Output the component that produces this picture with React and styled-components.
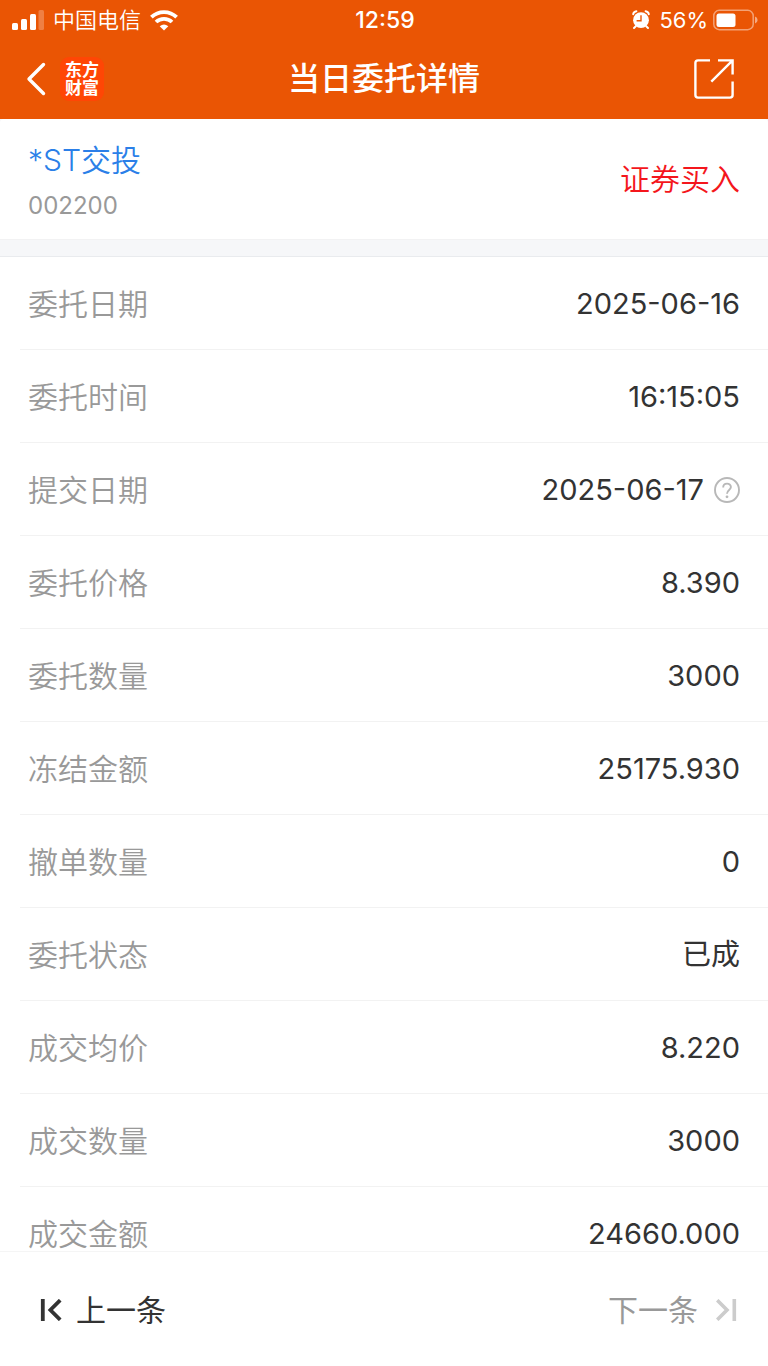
import React from 'react'
import styled, { createGlobalStyle } from 'styled-components'

const GlobalStyle = createGlobalStyle`
  * {
    box-sizing: border-box;
  }

  body {
    margin: 0;
    background: #ffffff;
    font-family: Inter, "Noto Sans CJK SC", sans-serif;
  }
`

const Screen = styled.div`
  height: 100vh;
  display: flex;
  flex-direction: column;
  background: #f6f7f9;
  color: #333333;
  font-size: 30px;
  line-height: 40px;
`

const Header = styled.header`
  flex: none;
  background: #ea5504;
  color: #ffffff;
`

const StatusBar = styled.div`
  height: 40px;
  padding: 0 10px 0 12px;
  display: grid;
  grid-template-columns: 1fr auto 1fr;
  align-items: center;
  font-size: 22px;
`

const StatusGroup = styled.div`
  display: flex;
  align-items: center;
  justify-content: ${props => props.$end ? 'flex-end' : 'flex-start'};
  gap: 9px;
`

const Carrier = styled.span`
  font-weight: 350;
`

const Battery = styled.div`
  display: flex;
  align-items: center;
  gap: 5px;
`

const Clock = styled.time`
  font-size: 23px;
  font-weight: 500;
`

const NavBar = styled.nav`
  height: 79px;
  padding: 0 24px 2px;
  display: grid;
  grid-template-columns: 1fr auto 1fr;
  align-items: center;
`

const NavLeft = styled.div`
  display: flex;
  align-items: center;
  gap: 12px;
`

const NavRight = styled.div`
  display: flex;
  justify-content: flex-end;
  padding-right: 10px;
`

const IconButton = styled.button`
  display: flex;
  padding: 0;
  border: 0;
  background: none;
  color: inherit;
  cursor: pointer;
`

const Logo = styled.div`
  width: 44px;
  height: 44px;
  padding: 4px 0;
  border-radius: 9px;
  background: #ff4605;
  font-size: 17px;
  font-weight: 700;
  line-height: 18px;
  text-align: center;
`

const Title = styled.h1`
  margin: 0;
  font-size: 32px;
  font-weight: 500;
`

const Summary = styled.section`
  flex: none;
  height: 120px;
  padding: 0 28px;
  display: flex;
  align-items: center;
  justify-content: space-between;
  border-radius: 4px 4px 0 0;
  background: #ffffff;
`

const Stock = styled.div`
  padding-top: 8px;
`

const StockName = styled.a`
  display: block;
  color: #2b7fe8;
  font-weight: 350;
  text-decoration: none;
`

const StockCode = styled.div`
  padding-top: 6px;
  color: #999999;
  font-size: 24px;
`

const Side = styled.div`
  color: #f4161c;
  font-weight: 350;
`

const Divider = styled.div`
  flex: none;
  height: 18px;
  border-top: 1px solid #f2f2f3;
  border-bottom: 1px solid #e9ebee;
`

const Details = styled.dl`
  flex: 1;
  min-height: 0;
  margin: 0;
  padding-left: 20px;
  overflow-y: auto;
  scrollbar-width: none;
  background: #ffffff;
`

const Row = styled.div`
  height: 93px;
  padding: 2px 28px 0 8px;
  display: flex;
  align-items: center;
  justify-content: space-between;
  border-bottom: 1px solid #f2f2f2;
`

const Label = styled.dt`
  color: #999999;
  font-weight: 350;
`

const Value = styled.dd`
  margin: 0;
  display: flex;
  align-items: center;
  gap: 10px;
  font-size: 29px;
`

const Footer = styled.footer`
  flex: none;
  height: 115px;
  padding: 2px 30px 0 40px;
  display: flex;
  align-items: center;
  justify-content: space-between;
  border-top: 1px solid #f5f5f5;
  background: #ffffff;
`

const PagerButton = styled.button`
  padding: 0;
  display: flex;
  align-items: center;
  gap: ${props => props.$gap}px;
  border: 0;
  background: none;
  color: #333333;
  font: inherit;
  cursor: pointer;

  &:disabled {
    color: #999999;
    cursor: default;
  }
`

const SignalIcon = () => (
  <svg width="32" height="20" viewBox="0 0 32 20" fill="#fff">
    <rect x="0" y="13" width="6" height="7" rx="1.5" />
    <rect x="9" y="9" width="6" height="11" rx="1.5" />
    <rect x="18" y="4" width="6" height="16" rx="1.5" />
    <rect x="26.5" y="0" width="5.5" height="20" rx="1.5" opacity="0.25" />
  </svg>
)

const WifiIcon = () => (
  <svg width="28" height="21" viewBox="0 0 28 21">
    <g fill="none" stroke="#fff" strokeWidth="3.8">
      <path d="M1.4 7.2C8.4 0.3 19.6 0.3 26.6 7.2" />
      <path d="M6 12C10.5 7.7 17.5 7.7 22 12" />
    </g>
    <path d="M14 20.6L9.7 16.2Q14 12.6 18.3 16.2Z" fill="#fff" />
  </svg>
)

const AlarmIcon = () => (
  <svg width="18" height="20" viewBox="0 0 18 20">
    <g fill="none" stroke="#fff" strokeWidth="2" strokeLinecap="round">
      <path d="M1.2 4.2Q1.6 1.6 4.4 1.2M13.6 1.2Q16.4 1.6 16.8 4.2" />
      <path d="M3.8 16.2L2 18M14.2 16.2L16 18" />
    </g>
    <circle cx="9" cy="10.2" r="7.9" fill="#fff" />
    <path d="M9 5.2V10.8H4.6" fill="none" stroke="#ea5504" strokeWidth="1.4" />
  </svg>
)

const BatteryIcon = () => (
  <svg width="45" height="22" viewBox="0 0 45 22">
    <rect x="0.8" y="1.3" width="39.4" height="19.4" rx="5.5" fill="none" stroke="#fff" strokeOpacity="0.45" strokeWidth="1.5" />
    <rect x="3.5" y="4.5" width="19" height="13.5" rx="2.5" fill="#fff" />
    <path d="M42 7.5Q44.6 8.2 44.6 11T42 14.5Z" fill="#fff" fillOpacity="0.5" />
  </svg>
)

const BackIcon = () => (
  <svg width="24" height="34" viewBox="0 0 24 34" fill="none" stroke="#fff" strokeWidth="3.4" strokeLinecap="round" strokeLinejoin="round">
    <path d="M19.5 2.5L5 17L19.5 31.5" />
  </svg>
)

const ShareIcon = () => (
  <svg width="40" height="40" viewBox="0 0 40 40" fill="none" stroke="#fff" strokeWidth="2.4">
    <path d="M16 1.4H4Q1.4 1.4 1.4 4V36Q1.4 38.6 4 38.6H36Q38.6 38.6 38.6 36V22.5" />
    <path d="M24 1.4H38.6V15.5M38.6 1.4L17.3 22.7" />
  </svg>
)

const HelpIcon = () => (
  <svg width="26" height="26" viewBox="0 0 26 26" fill="none" stroke="#b8b8b8" strokeWidth="1.9">
    <circle cx="13" cy="13" r="12" />
    <path d="M9.2 10.4C9.2 5.4 16.9 5.6 16.9 10C16.9 13 13 13 13 16.8" />
    <circle cx="13" cy="19.8" r="1.4" fill="#b8b8b8" stroke="none" />
  </svg>
)

const FirstIcon = () => (
  <svg width="22" height="22" viewBox="0 0 22 22" fill="none" stroke="#333333" strokeWidth="3.8">
    <path d="M2.8 0V22M20.2 1.2L10.4 11L20.2 20.8" />
  </svg>
)

const LastIcon = () => (
  <svg width="22" height="22" viewBox="0 0 22 22" fill="none" stroke="#cccccc" strokeWidth="3.6">
    <path d="M18.3 0V22M1.2 1.2L11 11L1.2 20.8" />
  </svg>
)

const details = [
  { label: '委托日期', value: '2025-06-16' },
  { label: '委托时间', value: '16:15:05' },
  { label: '提交日期', value: '2025-06-17', help: true },
  { label: '委托价格', value: '8.390' },
  { label: '委托数量', value: '3000' },
  { label: '冻结金额', value: '25175.930' },
  { label: '撤单数量', value: '0' },
  { label: '委托状态', value: '已成' },
  { label: '成交均价', value: '8.220' },
  { label: '成交数量', value: '3000' },
  { label: '成交金额', value: '24660.000' },
]

const App = () => (
  <Screen>
    <GlobalStyle />

    <Header>
      <StatusBar>
        <StatusGroup>
          <SignalIcon />
          <Carrier>中国电信</Carrier>
          <WifiIcon />
        </StatusGroup>
        <Clock>12:59</Clock>
        <StatusGroup $end>
          <AlarmIcon />
          <Battery>
            56%
            <BatteryIcon />
          </Battery>
        </StatusGroup>
      </StatusBar>

      <NavBar>
        <NavLeft>
          <IconButton type="button" aria-label="返回">
            <BackIcon />
          </IconButton>
          <Logo>东方<br />财富</Logo>
        </NavLeft>
        <Title>当日委托详情</Title>
        <NavRight>
          <IconButton type="button" aria-label="分享">
            <ShareIcon />
          </IconButton>
        </NavRight>
      </NavBar>
    </Header>

    <Summary>
      <Stock>
        <StockName href="#">*ST交投</StockName>
        <StockCode>002200</StockCode>
      </Stock>
      <Side>证券买入</Side>
    </Summary>

    <Divider />

    <Details>
      { details.map(item => (
        <Row key={item.label}>
          <Label>{item.label}</Label>
          <Value>
            {item.value}
            { item.help && (
              <IconButton type="button" aria-label="说明">
                <HelpIcon />
              </IconButton>
            ) }
          </Value>
        </Row>
      )) }
    </Details>

    <Footer>
      <PagerButton type="button" $gap={14}>
        <FirstIcon />
        上一条
      </PagerButton>
      <PagerButton type="button" $gap={18} disabled>
        下一条
        <LastIcon />
      </PagerButton>
    </Footer>
  </Screen>
)

export default App
